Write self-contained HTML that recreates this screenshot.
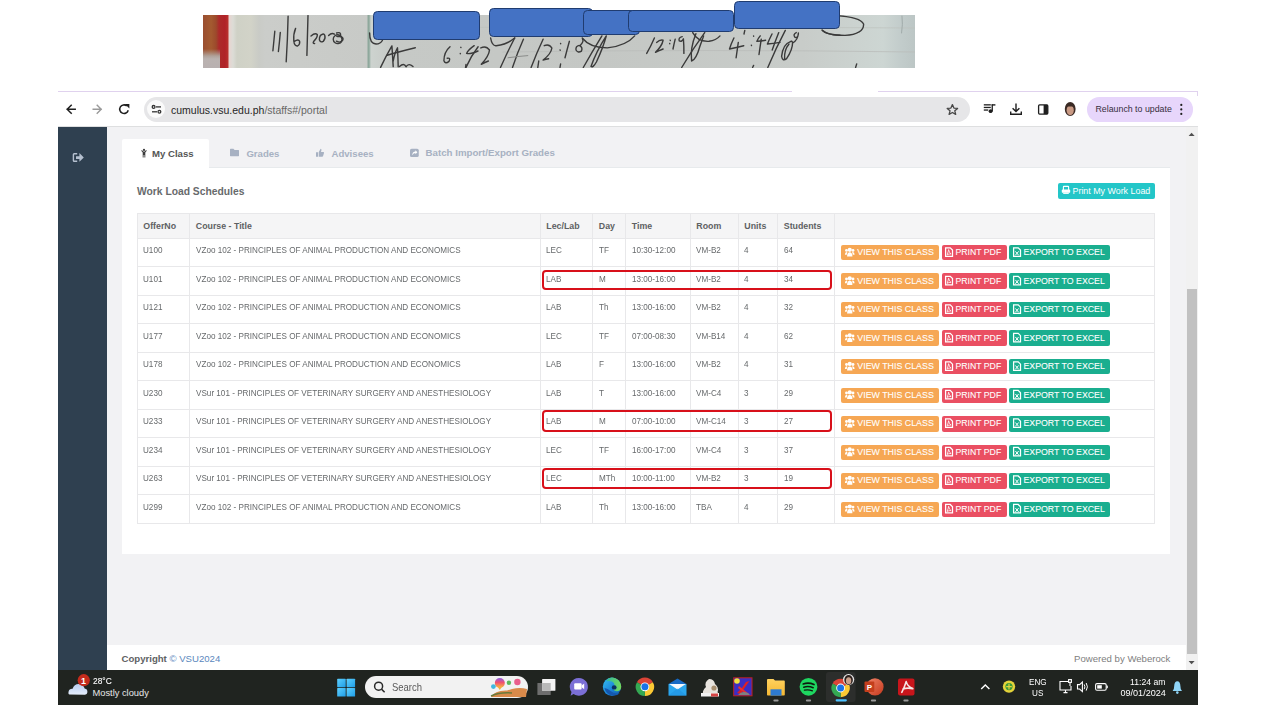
<!DOCTYPE html>
<html><head><meta charset="utf-8"><style>
html,body{margin:0;padding:0;width:1280px;height:720px;overflow:hidden;background:#ffffff;font-family:"Liberation Sans", sans-serif;position:relative}
</style></head><body>
<div style="position:absolute;left:203px;top:15px;width:712px;height:53px;overflow:hidden;background:linear-gradient(90deg,#9a4e30 0px,#a45a30 8px,#9c4a2c 13px,#ac2a2a 16px,#b02228 22px,#b8302e 25px,#e8d4d0 26px,#dcdcd6 30px,#cfd1c6 34px,#d2d3c8 48px,#c9cbc6 56px,#cbcdca 62px,#c8cac7 164px,#8ea89c 165px,#8ea89c 166px,#cdd3cf 168px,#c6c9c6 190px,#c4c7c4 400px,#c8ccc9 600px,#cdd6d3 680px,#c2cccb 698px,#bcc6c5 712px)"><div style="position:absolute;left:0;top:34px;width:17px;height:19px;background:linear-gradient(180deg,rgba(176,120,60,0) 0px,#b0a29a 7px,#bab2b0 10px,#b8b0b0 19px)"></div><svg width="712" height="53" style="position:absolute;left:0;top:0;filter:blur(0.35px)" fill="none" stroke="#3a3a3a" stroke-width="1.4" stroke-linecap="round" stroke-linejoin="round"><path d="M300 37 Q500 34 712 37" stroke="#babdba" stroke-width="0.8"/><path d="M190 13 Q400 11 712 13" stroke="#bdc1bd" stroke-width="0.7"/><g transform="translate(-203,-15)"><path d="M274.8 31.2 Q274 40 272.9 50.7"/><path d="M280.3 32.4 Q279.5 42 278.4 51.5"/><path d="M288.1 16.3 Q287.6 40 286.2 61.7"/><path d="M295.6 28.4 Q293.2 34 293.8 41 Q294.4 46.4 297.6 46 Q300.2 44.6 299.6 41.2 Q298.4 38.8 294.4 41.4"/><path d="M308 15.6 Q307.4 36 306.9 55.4"/><path d="M311 36 Q315 32.5 317.3 34.5 Q317.6 37.5 313.6 41.5 Q312.4 43.6 314.6 43.5"/><path d="M322.6 34.2 Q319.2 35 319.4 39.8 Q320.2 42.8 323.2 41.4 Q325.8 38.6 324.8 35.4 Q324 33.6 322.6 34.2"/><path d="M328.6 35.6 Q331.6 32.4 334.4 34.2"/><path d="M336.6 33 Q341 31.6 340.6 35.2 Q338.6 36.8 336.8 36.4 M336.8 36.4 Q344.6 36.2 342.6 40.4 Q340 43.4 336.4 41.2"/><path d="M338.9 35 A4.4 4.4 0 1 0 339 43.4 A4.4 4.4 0 0 0 338.9 35"/><path d="M369.6 33 Q369.6 43.6 376 44 Q380.6 44 382.5 40.25"/><path d="M380.6 67.4 Q386 56 391.9 45.9 Q392.6 56 393.2 66.6 M393.2 61 Q395 52 397.5 47.75 Q398 58 398.2 66.8"/><path d="M387.2 55.25 Q398 52 415.3 47.75"/><path d="M399.5 66.6 Q404 62.4 406 66.8 Q408.6 62.6 413 66.6"/><path d="M450 46.8 Q444 52 443.9 60.75 Q445.2 64.4 449 61.4 Q451 57.6 447.2 58.2"/><path d="M460.8 47.3 L460.9 47.6 M460.3 53.4 L460.4 53.7"/><path d="M478.1 46.8 Q471 56 466 67.4"/><path d="M474.2 45.7 Q468 50 466.6 53.4 Q470 54.4 478 51"/><path d="M480.8 47.9 Q486 45.2 489.5 50 Q489 56 481.3 64.3 Q485 62.4 488.4 61"/><path d="M490.6 38 Q492 46 496.1 45.7 Q507 44.6 514.7 38"/><path d="M514.7 38 Q507.4 52 500.5 67.5"/><path d="M523.4 39.2 Q517.6 52 512.5 67.5"/><path d="M508 57.75 Q518 56.4 527.8 55.6" stroke="#8a8c8a" stroke-width="1"/><path d="M543.1 39.2 Q537 52 531.1 67.5"/><path d="M544.2 45.7 Q549 43.4 551.9 48 Q551 54 543.1 60 Q546 59.2 548.6 58.8"/><path d="M560.6 43.5 L560.7 43.8 M560.1 50 L560.2 50.3"/><path d="M569.4 41.3 Q567 50 565 57.75"/><path d="M579.2 45.4 Q575.4 46.2 576 50 Q578 53.4 581.4 51.2 Q583.2 47.2 579.2 45.4 M580.6 45 Q584 41.6 582.6 39.2"/><path d="M538.75 61 L537.8 67.5 M560.6 64 L560 67.5 M466 64.4 L465.5 67.5"/><path d="M582.2 38 Q590 47.9 607.3 47.9 Q626 46 634.7 35.9"/><path d="M601.9 35.9 Q592 52 583.3 67.5"/><path d="M606.25 35.9 Q596 52 591 66.5 Q593 68 596.4 62 Q603 48 606.25 36"/><path d="M654.4 38 Q651 46 646.7 53.4"/><path d="M656.6 42.4 Q660 39.4 663.1 40.25 Q662 46 655.5 52.3 Q659 50.6 663.1 49"/><path d="M670.2 40.25 L670.3 40.5 M669.7 43.5 L669.8 43.8"/><path d="M675.2 39.2 Q674 44 673 49"/><path d="M682.2 36.6 Q678.2 37.4 679.2 40.8 Q682 42.2 683.4 38.8 Q684 46 683.9 53.4"/><path d="M704.7 32.6 Q692 50 681.7 67.5"/><path d="M695.9 33.7 Q690 48 691.6 61 Q696 60 700 46 Q703 38 703.6 35.9"/><path d="M692.7 32.6 Q698 42 709 41.3 Q716 40.4 720 35.9"/><path d="M733.9 38 Q731 44 729.5 49 Q736 47.6 743.75 45.7"/><path d="M738.3 42.4 Q737.2 50 736.1 57.75"/><path d="M744.8 30.4 L744 34"/><path d="M753.6 35.9 L753.7 36.2 M751.4 45.2 L751.5 45.5"/><path d="M760.2 35.9 Q758 38.6 756.9 41.3 Q761 41 765.6 40.25"/><path d="M761.25 39.2 Q760.2 46 759 54.5"/><path d="M785.3 30.4 Q776 48 767.8 67.5"/><path d="M772 34 Q769 40 767.4 44 Q773 43.4 780 42.4"/><path d="M789 44 Q784 50 784.6 58.8"/><path d="M778.75 32.6 Q775.4 41 772.2 50"/><path d="M790.4 41.6 Q783 44 781.6 56.4 Q782.6 62 786.6 58.6 Q792.6 50 792.6 42.6 Q791.8 40.4 790.4 41.6"/><path d="M796.25 32.6 Q792.6 34.4 795 37.4 Q798.4 38 798.4 33 Q798 40 792.6 43"/><path d="M822.5 30.4 Q826 34.8 840 35.3"/><path d="M753.6 65.4 L752.6 67.5"/><path d="M836 15.6 Q860 17 863.6 24 Q864 34 845 35.4 Q826 35 822 30"/><path d="M856.7 63.9 L855.6 67.5"/><path d="M902 16 Q903 24 901.6 33" stroke="#a0aaa9" stroke-width="1"/></g></svg></div><div style="position:absolute;left:373px;top:11.3px;width:107.00px;height:28.40px;background:#4472c4;border:1.3px solid #203c70;border-radius:4.5px;box-sizing:border-box"></div><div style="position:absolute;left:489.4px;top:8.3px;width:104.00px;height:29.20px;background:#4472c4;border:1.3px solid #203c70;border-radius:4.5px;box-sizing:border-box"></div><div style="position:absolute;left:583.3px;top:10.3px;width:56.70px;height:24.70px;background:#4472c4;border:1.3px solid #203c70;border-radius:4.5px;box-sizing:border-box"></div><div style="position:absolute;left:628px;top:10.3px;width:106.00px;height:21.40px;background:#4472c4;border:1.3px solid #203c70;border-radius:4.5px;box-sizing:border-box"></div><div style="position:absolute;left:734px;top:1.1px;width:106.30px;height:28.40px;background:#4472c4;border:1.3px solid #203c70;border-radius:4.5px;box-sizing:border-box"></div><div style="position:absolute;left:58px;top:91px;width:1140.00px;height:35.00px;background:#ffffff"></div><div style="position:absolute;left:58px;top:91px;width:733.50px;height:1.00px;background:#e0d2ee"></div><div style="position:absolute;left:877.5px;top:91px;width:320.50px;height:1.00px;background:#e0d2ee"></div><div style="position:absolute;left:1197px;top:91px;width:1.00px;height:5.00px;background:#e0d2ee"></div><div style="position:absolute;left:58px;top:126px;width:1140.00px;height:1.40px;background:#dedfe0"></div><div style="position:absolute;left:144px;top:97px;width:826.00px;height:25.00px;background:#e6e6e8;border-radius:12.5px"></div><div style="position:absolute;left:147.3px;top:100.3px;width:18.10px;height:18.10px;background:#fafafa;border-radius:50%"></div><div style="position:absolute;left:171.00px;top:104.36px;font-size:10.5px;line-height:12.60px;font-weight:normal;color:#262626;white-space:nowrap;">cumulus.vsu.edu.ph<span style="color:#666">/staffs#/portal</span></div><div style="position:absolute;left:1086.8px;top:97.2px;width:106.20px;height:24.60px;background:#e7d6fb;border-radius:12.3px"></div><div style="position:absolute;left:1095.50px;top:104.27px;font-size:8.8px;line-height:10.56px;font-weight:normal;color:#362e40;white-space:nowrap;">Relaunch to update</div><div style="position:absolute;left:58px;top:127.4px;width:49.00px;height:542.60px;background:#2f4050"></div><div style="position:absolute;left:107px;top:127.4px;width:1079.00px;height:517.60px;background:#f2f2f4"></div><div style="position:absolute;left:107px;top:645px;width:1079.00px;height:25.00px;background:#ffffff"></div><div style="position:absolute;left:1186px;top:127.4px;width:12.00px;height:542.60px;background:#f1f1f1"></div><div style="position:absolute;left:1186.6px;top:289.4px;width:10.20px;height:364.60px;background:#c1c1c1"></div><div style="position:absolute;left:122.4px;top:139px;width:86.40px;height:29.00px;background:#ffffff;border-radius:2px 2px 0 0"></div><div style="position:absolute;left:208.8px;top:167px;width:961.20px;height:1.00px;background:#e7eaec"></div><div style="position:absolute;left:152.00px;top:147.51px;font-size:9.6px;line-height:11.52px;font-weight:bold;color:#555555;white-space:nowrap;">My Class</div><div style="position:absolute;left:246.40px;top:147.51px;font-size:9.6px;line-height:11.52px;font-weight:bold;color:#a7b1c2;white-space:nowrap;">Grades</div><div style="position:absolute;left:331.50px;top:147.51px;font-size:9.6px;line-height:11.52px;font-weight:bold;color:#a7b1c2;white-space:nowrap;">Advisees</div><div style="position:absolute;left:425.60px;top:147.42px;font-size:9.7px;line-height:11.64px;font-weight:bold;color:#a7b1c2;white-space:nowrap;">Batch Import/Export Grades</div><div style="position:absolute;left:122.4px;top:168px;width:1047.60px;height:386.00px;background:#ffffff"></div><div style="position:absolute;left:137.00px;top:186.05px;font-size:10.3px;line-height:12.36px;font-weight:bold;color:#676a6c;white-space:nowrap;">Work Load Schedules</div><div style="position:absolute;left:1057.5px;top:182.5px;width:97.50px;height:16.00px;background:#23c6c8;border-radius:2px"></div><div style="position:absolute;left:1072.50px;top:185.58px;font-size:8.9px;line-height:10.68px;font-weight:normal;color:#ffffff;white-space:nowrap;">Print My Work Load</div><div style="position:absolute;left:137px;top:213.0px;width:1017.50px;height:25.30px;background:#f5f5f6"></div><div style="position:absolute;left:137px;top:237.8px;width:1017.50px;height:1.00px;background:#e8e8ea"></div><div style="position:absolute;left:137px;top:266.32px;width:1017.50px;height:1.00px;background:#e8e8ea"></div><div style="position:absolute;left:137px;top:294.84000000000003px;width:1017.50px;height:1.00px;background:#e8e8ea"></div><div style="position:absolute;left:137px;top:323.36px;width:1017.50px;height:1.00px;background:#e8e8ea"></div><div style="position:absolute;left:137px;top:351.88px;width:1017.50px;height:1.00px;background:#e8e8ea"></div><div style="position:absolute;left:137px;top:380.4px;width:1017.50px;height:1.00px;background:#e8e8ea"></div><div style="position:absolute;left:137px;top:408.92px;width:1017.50px;height:1.00px;background:#e8e8ea"></div><div style="position:absolute;left:137px;top:437.44px;width:1017.50px;height:1.00px;background:#e8e8ea"></div><div style="position:absolute;left:137px;top:465.96000000000004px;width:1017.50px;height:1.00px;background:#e8e8ea"></div><div style="position:absolute;left:137px;top:494.48px;width:1017.50px;height:1.00px;background:#e8e8ea"></div><div style="position:absolute;left:137px;top:523.0px;width:1017.50px;height:1.00px;background:#e8e8ea"></div><div style="position:absolute;left:137px;top:212.5px;width:1017.50px;height:1.00px;background:#e8e8ea"></div><div style="position:absolute;left:136.5px;top:213.0px;width:1.00px;height:310.50px;background:#e8e8ea"></div><div style="position:absolute;left:189.0px;top:213.0px;width:1.00px;height:310.50px;background:#e8e8ea"></div><div style="position:absolute;left:539.5px;top:213.0px;width:1.00px;height:310.50px;background:#e8e8ea"></div><div style="position:absolute;left:592.0px;top:213.0px;width:1.00px;height:310.50px;background:#e8e8ea"></div><div style="position:absolute;left:625.0px;top:213.0px;width:1.00px;height:310.50px;background:#e8e8ea"></div><div style="position:absolute;left:689.5px;top:213.0px;width:1.00px;height:310.50px;background:#e8e8ea"></div><div style="position:absolute;left:737.5px;top:213.0px;width:1.00px;height:310.50px;background:#e8e8ea"></div><div style="position:absolute;left:777.0px;top:213.0px;width:1.00px;height:310.50px;background:#e8e8ea"></div><div style="position:absolute;left:834.0px;top:213.0px;width:1.00px;height:310.50px;background:#e8e8ea"></div><div style="position:absolute;left:1154.0px;top:213.0px;width:1.00px;height:310.50px;background:#e8e8ea"></div><div style="position:absolute;left:143.30px;top:220.57px;font-size:8.8px;line-height:10.56px;font-weight:bold;color:#5e6163;white-space:nowrap;">OfferNo</div><div style="position:absolute;left:195.80px;top:220.57px;font-size:8.8px;line-height:10.56px;font-weight:bold;color:#5e6163;white-space:nowrap;">Course - Title</div><div style="position:absolute;left:546.30px;top:220.57px;font-size:8.8px;line-height:10.56px;font-weight:bold;color:#5e6163;white-space:nowrap;">Lec/Lab</div><div style="position:absolute;left:598.80px;top:220.57px;font-size:8.8px;line-height:10.56px;font-weight:bold;color:#5e6163;white-space:nowrap;">Day</div><div style="position:absolute;left:631.80px;top:220.57px;font-size:8.8px;line-height:10.56px;font-weight:bold;color:#5e6163;white-space:nowrap;">Time</div><div style="position:absolute;left:696.30px;top:220.57px;font-size:8.8px;line-height:10.56px;font-weight:bold;color:#5e6163;white-space:nowrap;">Room</div><div style="position:absolute;left:744.30px;top:220.57px;font-size:8.8px;line-height:10.56px;font-weight:bold;color:#5e6163;white-space:nowrap;">Units</div><div style="position:absolute;left:783.80px;top:220.57px;font-size:8.8px;line-height:10.56px;font-weight:bold;color:#5e6163;white-space:nowrap;">Students</div><div style="position:absolute;left:143.20px;top:245.00px;font-size:8.35px;line-height:10.02px;font-weight:normal;color:#676a6c;white-space:nowrap;transform:scaleX(0.975);transform-origin:0 0;">U100</div><div style="position:absolute;left:195.70px;top:245.00px;font-size:8.35px;line-height:10.02px;font-weight:normal;color:#676a6c;white-space:nowrap;transform:scaleX(0.975);transform-origin:0 0;">VZoo 102 - PRINCIPLES OF ANIMAL PRODUCTION AND ECONOMICS</div><div style="position:absolute;left:546.20px;top:245.00px;font-size:8.35px;line-height:10.02px;font-weight:normal;color:#676a6c;white-space:nowrap;transform:scaleX(0.975);transform-origin:0 0;">LEC</div><div style="position:absolute;left:598.70px;top:245.00px;font-size:8.35px;line-height:10.02px;font-weight:normal;color:#676a6c;white-space:nowrap;transform:scaleX(0.975);transform-origin:0 0;">TF</div><div style="position:absolute;left:631.70px;top:245.00px;font-size:8.35px;line-height:10.02px;font-weight:normal;color:#676a6c;white-space:nowrap;transform:scaleX(0.975);transform-origin:0 0;">10:30-12:00</div><div style="position:absolute;left:696.20px;top:245.00px;font-size:8.35px;line-height:10.02px;font-weight:normal;color:#676a6c;white-space:nowrap;transform:scaleX(0.975);transform-origin:0 0;">VM-B2</div><div style="position:absolute;left:744.20px;top:245.00px;font-size:8.35px;line-height:10.02px;font-weight:normal;color:#676a6c;white-space:nowrap;transform:scaleX(0.975);transform-origin:0 0;">4</div><div style="position:absolute;left:783.70px;top:245.00px;font-size:8.35px;line-height:10.02px;font-weight:normal;color:#676a6c;white-space:nowrap;transform:scaleX(0.975);transform-origin:0 0;">64</div><div style="position:absolute;left:840.6px;top:244.9px;width:98.20px;height:15.50px;background:#f6a754;border-radius:2px"></div><div style="position:absolute;left:941.5px;top:244.9px;width:65.10px;height:15.50px;background:#ea4f62;border-radius:2px"></div><div style="position:absolute;left:1009.2px;top:244.9px;width:101.20px;height:15.50px;background:#1aae8f;border-radius:2px"></div><div style="position:absolute;left:857.30px;top:247.02px;font-size:8.85px;line-height:10.62px;font-weight:normal;color:#ffffff;white-space:nowrap;-webkit-text-stroke:0.08px #fff;">VIEW THIS CLASS</div><div style="position:absolute;left:955.50px;top:247.17px;font-size:8.7px;line-height:10.44px;font-weight:normal;color:#ffffff;white-space:nowrap;-webkit-text-stroke:0.08px #fff;">PRINT PDF</div><div style="position:absolute;left:1023.40px;top:247.07px;font-size:8.8px;line-height:10.56px;font-weight:normal;color:#ffffff;white-space:nowrap;-webkit-text-stroke:0.08px #fff;">EXPORT TO EXCEL</div><div style="position:absolute;left:143.20px;top:273.52px;font-size:8.35px;line-height:10.02px;font-weight:normal;color:#676a6c;white-space:nowrap;transform:scaleX(0.975);transform-origin:0 0;">U101</div><div style="position:absolute;left:195.70px;top:273.52px;font-size:8.35px;line-height:10.02px;font-weight:normal;color:#676a6c;white-space:nowrap;transform:scaleX(0.975);transform-origin:0 0;">VZoo 102 - PRINCIPLES OF ANIMAL PRODUCTION AND ECONOMICS</div><div style="position:absolute;left:546.20px;top:273.52px;font-size:8.35px;line-height:10.02px;font-weight:normal;color:#676a6c;white-space:nowrap;transform:scaleX(0.975);transform-origin:0 0;">LAB</div><div style="position:absolute;left:598.70px;top:273.52px;font-size:8.35px;line-height:10.02px;font-weight:normal;color:#676a6c;white-space:nowrap;transform:scaleX(0.975);transform-origin:0 0;">M</div><div style="position:absolute;left:631.70px;top:273.52px;font-size:8.35px;line-height:10.02px;font-weight:normal;color:#676a6c;white-space:nowrap;transform:scaleX(0.975);transform-origin:0 0;">13:00-16:00</div><div style="position:absolute;left:696.20px;top:273.52px;font-size:8.35px;line-height:10.02px;font-weight:normal;color:#676a6c;white-space:nowrap;transform:scaleX(0.975);transform-origin:0 0;">VM-B2</div><div style="position:absolute;left:744.20px;top:273.52px;font-size:8.35px;line-height:10.02px;font-weight:normal;color:#676a6c;white-space:nowrap;transform:scaleX(0.975);transform-origin:0 0;">4</div><div style="position:absolute;left:783.70px;top:273.52px;font-size:8.35px;line-height:10.02px;font-weight:normal;color:#676a6c;white-space:nowrap;transform:scaleX(0.975);transform-origin:0 0;">34</div><div style="position:absolute;left:840.6px;top:273.42px;width:98.20px;height:15.50px;background:#f6a754;border-radius:2px"></div><div style="position:absolute;left:941.5px;top:273.42px;width:65.10px;height:15.50px;background:#ea4f62;border-radius:2px"></div><div style="position:absolute;left:1009.2px;top:273.42px;width:101.20px;height:15.50px;background:#1aae8f;border-radius:2px"></div><div style="position:absolute;left:857.30px;top:275.54px;font-size:8.85px;line-height:10.62px;font-weight:normal;color:#ffffff;white-space:nowrap;-webkit-text-stroke:0.08px #fff;">VIEW THIS CLASS</div><div style="position:absolute;left:955.50px;top:275.69px;font-size:8.7px;line-height:10.44px;font-weight:normal;color:#ffffff;white-space:nowrap;-webkit-text-stroke:0.08px #fff;">PRINT PDF</div><div style="position:absolute;left:1023.40px;top:275.59px;font-size:8.8px;line-height:10.56px;font-weight:normal;color:#ffffff;white-space:nowrap;-webkit-text-stroke:0.08px #fff;">EXPORT TO EXCEL</div><div style="position:absolute;left:143.20px;top:302.04px;font-size:8.35px;line-height:10.02px;font-weight:normal;color:#676a6c;white-space:nowrap;transform:scaleX(0.975);transform-origin:0 0;">U121</div><div style="position:absolute;left:195.70px;top:302.04px;font-size:8.35px;line-height:10.02px;font-weight:normal;color:#676a6c;white-space:nowrap;transform:scaleX(0.975);transform-origin:0 0;">VZoo 102 - PRINCIPLES OF ANIMAL PRODUCTION AND ECONOMICS</div><div style="position:absolute;left:546.20px;top:302.04px;font-size:8.35px;line-height:10.02px;font-weight:normal;color:#676a6c;white-space:nowrap;transform:scaleX(0.975);transform-origin:0 0;">LAB</div><div style="position:absolute;left:598.70px;top:302.04px;font-size:8.35px;line-height:10.02px;font-weight:normal;color:#676a6c;white-space:nowrap;transform:scaleX(0.975);transform-origin:0 0;">Th</div><div style="position:absolute;left:631.70px;top:302.04px;font-size:8.35px;line-height:10.02px;font-weight:normal;color:#676a6c;white-space:nowrap;transform:scaleX(0.975);transform-origin:0 0;">13:00-16:00</div><div style="position:absolute;left:696.20px;top:302.04px;font-size:8.35px;line-height:10.02px;font-weight:normal;color:#676a6c;white-space:nowrap;transform:scaleX(0.975);transform-origin:0 0;">VM-B2</div><div style="position:absolute;left:744.20px;top:302.04px;font-size:8.35px;line-height:10.02px;font-weight:normal;color:#676a6c;white-space:nowrap;transform:scaleX(0.975);transform-origin:0 0;">4</div><div style="position:absolute;left:783.70px;top:302.04px;font-size:8.35px;line-height:10.02px;font-weight:normal;color:#676a6c;white-space:nowrap;transform:scaleX(0.975);transform-origin:0 0;">32</div><div style="position:absolute;left:840.6px;top:301.94000000000005px;width:98.20px;height:15.50px;background:#f6a754;border-radius:2px"></div><div style="position:absolute;left:941.5px;top:301.94000000000005px;width:65.10px;height:15.50px;background:#ea4f62;border-radius:2px"></div><div style="position:absolute;left:1009.2px;top:301.94000000000005px;width:101.20px;height:15.50px;background:#1aae8f;border-radius:2px"></div><div style="position:absolute;left:857.30px;top:304.06px;font-size:8.85px;line-height:10.62px;font-weight:normal;color:#ffffff;white-space:nowrap;-webkit-text-stroke:0.08px #fff;">VIEW THIS CLASS</div><div style="position:absolute;left:955.50px;top:304.21px;font-size:8.7px;line-height:10.44px;font-weight:normal;color:#ffffff;white-space:nowrap;-webkit-text-stroke:0.08px #fff;">PRINT PDF</div><div style="position:absolute;left:1023.40px;top:304.11px;font-size:8.8px;line-height:10.56px;font-weight:normal;color:#ffffff;white-space:nowrap;-webkit-text-stroke:0.08px #fff;">EXPORT TO EXCEL</div><div style="position:absolute;left:143.20px;top:330.56px;font-size:8.35px;line-height:10.02px;font-weight:normal;color:#676a6c;white-space:nowrap;transform:scaleX(0.975);transform-origin:0 0;">U177</div><div style="position:absolute;left:195.70px;top:330.56px;font-size:8.35px;line-height:10.02px;font-weight:normal;color:#676a6c;white-space:nowrap;transform:scaleX(0.975);transform-origin:0 0;">VZoo 102 - PRINCIPLES OF ANIMAL PRODUCTION AND ECONOMICS</div><div style="position:absolute;left:546.20px;top:330.56px;font-size:8.35px;line-height:10.02px;font-weight:normal;color:#676a6c;white-space:nowrap;transform:scaleX(0.975);transform-origin:0 0;">LEC</div><div style="position:absolute;left:598.70px;top:330.56px;font-size:8.35px;line-height:10.02px;font-weight:normal;color:#676a6c;white-space:nowrap;transform:scaleX(0.975);transform-origin:0 0;">TF</div><div style="position:absolute;left:631.70px;top:330.56px;font-size:8.35px;line-height:10.02px;font-weight:normal;color:#676a6c;white-space:nowrap;transform:scaleX(0.975);transform-origin:0 0;">07:00-08:30</div><div style="position:absolute;left:696.20px;top:330.56px;font-size:8.35px;line-height:10.02px;font-weight:normal;color:#676a6c;white-space:nowrap;transform:scaleX(0.975);transform-origin:0 0;">VM-B14</div><div style="position:absolute;left:744.20px;top:330.56px;font-size:8.35px;line-height:10.02px;font-weight:normal;color:#676a6c;white-space:nowrap;transform:scaleX(0.975);transform-origin:0 0;">4</div><div style="position:absolute;left:783.70px;top:330.56px;font-size:8.35px;line-height:10.02px;font-weight:normal;color:#676a6c;white-space:nowrap;transform:scaleX(0.975);transform-origin:0 0;">62</div><div style="position:absolute;left:840.6px;top:330.46000000000004px;width:98.20px;height:15.50px;background:#f6a754;border-radius:2px"></div><div style="position:absolute;left:941.5px;top:330.46000000000004px;width:65.10px;height:15.50px;background:#ea4f62;border-radius:2px"></div><div style="position:absolute;left:1009.2px;top:330.46000000000004px;width:101.20px;height:15.50px;background:#1aae8f;border-radius:2px"></div><div style="position:absolute;left:857.30px;top:332.58px;font-size:8.85px;line-height:10.62px;font-weight:normal;color:#ffffff;white-space:nowrap;-webkit-text-stroke:0.08px #fff;">VIEW THIS CLASS</div><div style="position:absolute;left:955.50px;top:332.73px;font-size:8.7px;line-height:10.44px;font-weight:normal;color:#ffffff;white-space:nowrap;-webkit-text-stroke:0.08px #fff;">PRINT PDF</div><div style="position:absolute;left:1023.40px;top:332.63px;font-size:8.8px;line-height:10.56px;font-weight:normal;color:#ffffff;white-space:nowrap;-webkit-text-stroke:0.08px #fff;">EXPORT TO EXCEL</div><div style="position:absolute;left:143.20px;top:359.08px;font-size:8.35px;line-height:10.02px;font-weight:normal;color:#676a6c;white-space:nowrap;transform:scaleX(0.975);transform-origin:0 0;">U178</div><div style="position:absolute;left:195.70px;top:359.08px;font-size:8.35px;line-height:10.02px;font-weight:normal;color:#676a6c;white-space:nowrap;transform:scaleX(0.975);transform-origin:0 0;">VZoo 102 - PRINCIPLES OF ANIMAL PRODUCTION AND ECONOMICS</div><div style="position:absolute;left:546.20px;top:359.08px;font-size:8.35px;line-height:10.02px;font-weight:normal;color:#676a6c;white-space:nowrap;transform:scaleX(0.975);transform-origin:0 0;">LAB</div><div style="position:absolute;left:598.70px;top:359.08px;font-size:8.35px;line-height:10.02px;font-weight:normal;color:#676a6c;white-space:nowrap;transform:scaleX(0.975);transform-origin:0 0;">F</div><div style="position:absolute;left:631.70px;top:359.08px;font-size:8.35px;line-height:10.02px;font-weight:normal;color:#676a6c;white-space:nowrap;transform:scaleX(0.975);transform-origin:0 0;">13:00-16:00</div><div style="position:absolute;left:696.20px;top:359.08px;font-size:8.35px;line-height:10.02px;font-weight:normal;color:#676a6c;white-space:nowrap;transform:scaleX(0.975);transform-origin:0 0;">VM-B2</div><div style="position:absolute;left:744.20px;top:359.08px;font-size:8.35px;line-height:10.02px;font-weight:normal;color:#676a6c;white-space:nowrap;transform:scaleX(0.975);transform-origin:0 0;">4</div><div style="position:absolute;left:783.70px;top:359.08px;font-size:8.35px;line-height:10.02px;font-weight:normal;color:#676a6c;white-space:nowrap;transform:scaleX(0.975);transform-origin:0 0;">31</div><div style="position:absolute;left:840.6px;top:358.98px;width:98.20px;height:15.50px;background:#f6a754;border-radius:2px"></div><div style="position:absolute;left:941.5px;top:358.98px;width:65.10px;height:15.50px;background:#ea4f62;border-radius:2px"></div><div style="position:absolute;left:1009.2px;top:358.98px;width:101.20px;height:15.50px;background:#1aae8f;border-radius:2px"></div><div style="position:absolute;left:857.30px;top:361.10px;font-size:8.85px;line-height:10.62px;font-weight:normal;color:#ffffff;white-space:nowrap;-webkit-text-stroke:0.08px #fff;">VIEW THIS CLASS</div><div style="position:absolute;left:955.50px;top:361.25px;font-size:8.7px;line-height:10.44px;font-weight:normal;color:#ffffff;white-space:nowrap;-webkit-text-stroke:0.08px #fff;">PRINT PDF</div><div style="position:absolute;left:1023.40px;top:361.15px;font-size:8.8px;line-height:10.56px;font-weight:normal;color:#ffffff;white-space:nowrap;-webkit-text-stroke:0.08px #fff;">EXPORT TO EXCEL</div><div style="position:absolute;left:143.20px;top:387.60px;font-size:8.35px;line-height:10.02px;font-weight:normal;color:#676a6c;white-space:nowrap;transform:scaleX(0.975);transform-origin:0 0;">U230</div><div style="position:absolute;left:195.70px;top:387.60px;font-size:8.35px;line-height:10.02px;font-weight:normal;color:#676a6c;white-space:nowrap;transform:scaleX(0.975);transform-origin:0 0;">VSur 101 - PRINCIPLES OF VETERINARY SURGERY AND ANESTHESIOLOGY</div><div style="position:absolute;left:546.20px;top:387.60px;font-size:8.35px;line-height:10.02px;font-weight:normal;color:#676a6c;white-space:nowrap;transform:scaleX(0.975);transform-origin:0 0;">LAB</div><div style="position:absolute;left:598.70px;top:387.60px;font-size:8.35px;line-height:10.02px;font-weight:normal;color:#676a6c;white-space:nowrap;transform:scaleX(0.975);transform-origin:0 0;">T</div><div style="position:absolute;left:631.70px;top:387.60px;font-size:8.35px;line-height:10.02px;font-weight:normal;color:#676a6c;white-space:nowrap;transform:scaleX(0.975);transform-origin:0 0;">13:00-16:00</div><div style="position:absolute;left:696.20px;top:387.60px;font-size:8.35px;line-height:10.02px;font-weight:normal;color:#676a6c;white-space:nowrap;transform:scaleX(0.975);transform-origin:0 0;">VM-C4</div><div style="position:absolute;left:744.20px;top:387.60px;font-size:8.35px;line-height:10.02px;font-weight:normal;color:#676a6c;white-space:nowrap;transform:scaleX(0.975);transform-origin:0 0;">3</div><div style="position:absolute;left:783.70px;top:387.60px;font-size:8.35px;line-height:10.02px;font-weight:normal;color:#676a6c;white-space:nowrap;transform:scaleX(0.975);transform-origin:0 0;">29</div><div style="position:absolute;left:840.6px;top:387.5px;width:98.20px;height:15.50px;background:#f6a754;border-radius:2px"></div><div style="position:absolute;left:941.5px;top:387.5px;width:65.10px;height:15.50px;background:#ea4f62;border-radius:2px"></div><div style="position:absolute;left:1009.2px;top:387.5px;width:101.20px;height:15.50px;background:#1aae8f;border-radius:2px"></div><div style="position:absolute;left:857.30px;top:389.62px;font-size:8.85px;line-height:10.62px;font-weight:normal;color:#ffffff;white-space:nowrap;-webkit-text-stroke:0.08px #fff;">VIEW THIS CLASS</div><div style="position:absolute;left:955.50px;top:389.77px;font-size:8.7px;line-height:10.44px;font-weight:normal;color:#ffffff;white-space:nowrap;-webkit-text-stroke:0.08px #fff;">PRINT PDF</div><div style="position:absolute;left:1023.40px;top:389.67px;font-size:8.8px;line-height:10.56px;font-weight:normal;color:#ffffff;white-space:nowrap;-webkit-text-stroke:0.08px #fff;">EXPORT TO EXCEL</div><div style="position:absolute;left:143.20px;top:416.12px;font-size:8.35px;line-height:10.02px;font-weight:normal;color:#676a6c;white-space:nowrap;transform:scaleX(0.975);transform-origin:0 0;">U233</div><div style="position:absolute;left:195.70px;top:416.12px;font-size:8.35px;line-height:10.02px;font-weight:normal;color:#676a6c;white-space:nowrap;transform:scaleX(0.975);transform-origin:0 0;">VSur 101 - PRINCIPLES OF VETERINARY SURGERY AND ANESTHESIOLOGY</div><div style="position:absolute;left:546.20px;top:416.12px;font-size:8.35px;line-height:10.02px;font-weight:normal;color:#676a6c;white-space:nowrap;transform:scaleX(0.975);transform-origin:0 0;">LAB</div><div style="position:absolute;left:598.70px;top:416.12px;font-size:8.35px;line-height:10.02px;font-weight:normal;color:#676a6c;white-space:nowrap;transform:scaleX(0.975);transform-origin:0 0;">M</div><div style="position:absolute;left:631.70px;top:416.12px;font-size:8.35px;line-height:10.02px;font-weight:normal;color:#676a6c;white-space:nowrap;transform:scaleX(0.975);transform-origin:0 0;">07:00-10:00</div><div style="position:absolute;left:696.20px;top:416.12px;font-size:8.35px;line-height:10.02px;font-weight:normal;color:#676a6c;white-space:nowrap;transform:scaleX(0.975);transform-origin:0 0;">VM-C14</div><div style="position:absolute;left:744.20px;top:416.12px;font-size:8.35px;line-height:10.02px;font-weight:normal;color:#676a6c;white-space:nowrap;transform:scaleX(0.975);transform-origin:0 0;">3</div><div style="position:absolute;left:783.70px;top:416.12px;font-size:8.35px;line-height:10.02px;font-weight:normal;color:#676a6c;white-space:nowrap;transform:scaleX(0.975);transform-origin:0 0;">27</div><div style="position:absolute;left:840.6px;top:416.02000000000004px;width:98.20px;height:15.50px;background:#f6a754;border-radius:2px"></div><div style="position:absolute;left:941.5px;top:416.02000000000004px;width:65.10px;height:15.50px;background:#ea4f62;border-radius:2px"></div><div style="position:absolute;left:1009.2px;top:416.02000000000004px;width:101.20px;height:15.50px;background:#1aae8f;border-radius:2px"></div><div style="position:absolute;left:857.30px;top:418.14px;font-size:8.85px;line-height:10.62px;font-weight:normal;color:#ffffff;white-space:nowrap;-webkit-text-stroke:0.08px #fff;">VIEW THIS CLASS</div><div style="position:absolute;left:955.50px;top:418.29px;font-size:8.7px;line-height:10.44px;font-weight:normal;color:#ffffff;white-space:nowrap;-webkit-text-stroke:0.08px #fff;">PRINT PDF</div><div style="position:absolute;left:1023.40px;top:418.19px;font-size:8.8px;line-height:10.56px;font-weight:normal;color:#ffffff;white-space:nowrap;-webkit-text-stroke:0.08px #fff;">EXPORT TO EXCEL</div><div style="position:absolute;left:143.20px;top:444.64px;font-size:8.35px;line-height:10.02px;font-weight:normal;color:#676a6c;white-space:nowrap;transform:scaleX(0.975);transform-origin:0 0;">U234</div><div style="position:absolute;left:195.70px;top:444.64px;font-size:8.35px;line-height:10.02px;font-weight:normal;color:#676a6c;white-space:nowrap;transform:scaleX(0.975);transform-origin:0 0;">VSur 101 - PRINCIPLES OF VETERINARY SURGERY AND ANESTHESIOLOGY</div><div style="position:absolute;left:546.20px;top:444.64px;font-size:8.35px;line-height:10.02px;font-weight:normal;color:#676a6c;white-space:nowrap;transform:scaleX(0.975);transform-origin:0 0;">LEC</div><div style="position:absolute;left:598.70px;top:444.64px;font-size:8.35px;line-height:10.02px;font-weight:normal;color:#676a6c;white-space:nowrap;transform:scaleX(0.975);transform-origin:0 0;">TF</div><div style="position:absolute;left:631.70px;top:444.64px;font-size:8.35px;line-height:10.02px;font-weight:normal;color:#676a6c;white-space:nowrap;transform:scaleX(0.975);transform-origin:0 0;">16:00-17:00</div><div style="position:absolute;left:696.20px;top:444.64px;font-size:8.35px;line-height:10.02px;font-weight:normal;color:#676a6c;white-space:nowrap;transform:scaleX(0.975);transform-origin:0 0;">VM-C4</div><div style="position:absolute;left:744.20px;top:444.64px;font-size:8.35px;line-height:10.02px;font-weight:normal;color:#676a6c;white-space:nowrap;transform:scaleX(0.975);transform-origin:0 0;">3</div><div style="position:absolute;left:783.70px;top:444.64px;font-size:8.35px;line-height:10.02px;font-weight:normal;color:#676a6c;white-space:nowrap;transform:scaleX(0.975);transform-origin:0 0;">37</div><div style="position:absolute;left:840.6px;top:444.54px;width:98.20px;height:15.50px;background:#f6a754;border-radius:2px"></div><div style="position:absolute;left:941.5px;top:444.54px;width:65.10px;height:15.50px;background:#ea4f62;border-radius:2px"></div><div style="position:absolute;left:1009.2px;top:444.54px;width:101.20px;height:15.50px;background:#1aae8f;border-radius:2px"></div><div style="position:absolute;left:857.30px;top:446.66px;font-size:8.85px;line-height:10.62px;font-weight:normal;color:#ffffff;white-space:nowrap;-webkit-text-stroke:0.08px #fff;">VIEW THIS CLASS</div><div style="position:absolute;left:955.50px;top:446.81px;font-size:8.7px;line-height:10.44px;font-weight:normal;color:#ffffff;white-space:nowrap;-webkit-text-stroke:0.08px #fff;">PRINT PDF</div><div style="position:absolute;left:1023.40px;top:446.71px;font-size:8.8px;line-height:10.56px;font-weight:normal;color:#ffffff;white-space:nowrap;-webkit-text-stroke:0.08px #fff;">EXPORT TO EXCEL</div><div style="position:absolute;left:143.20px;top:473.16px;font-size:8.35px;line-height:10.02px;font-weight:normal;color:#676a6c;white-space:nowrap;transform:scaleX(0.975);transform-origin:0 0;">U263</div><div style="position:absolute;left:195.70px;top:473.16px;font-size:8.35px;line-height:10.02px;font-weight:normal;color:#676a6c;white-space:nowrap;transform:scaleX(0.975);transform-origin:0 0;">VSur 101 - PRINCIPLES OF VETERINARY SURGERY AND ANESTHESIOLOGY</div><div style="position:absolute;left:546.20px;top:473.16px;font-size:8.35px;line-height:10.02px;font-weight:normal;color:#676a6c;white-space:nowrap;transform:scaleX(0.975);transform-origin:0 0;">LEC</div><div style="position:absolute;left:598.70px;top:473.16px;font-size:8.35px;line-height:10.02px;font-weight:normal;color:#676a6c;white-space:nowrap;transform:scaleX(0.975);transform-origin:0 0;">MTh</div><div style="position:absolute;left:631.70px;top:473.16px;font-size:8.35px;line-height:10.02px;font-weight:normal;color:#676a6c;white-space:nowrap;transform:scaleX(0.975);transform-origin:0 0;">10:00-11:00</div><div style="position:absolute;left:696.20px;top:473.16px;font-size:8.35px;line-height:10.02px;font-weight:normal;color:#676a6c;white-space:nowrap;transform:scaleX(0.975);transform-origin:0 0;">VM-B2</div><div style="position:absolute;left:744.20px;top:473.16px;font-size:8.35px;line-height:10.02px;font-weight:normal;color:#676a6c;white-space:nowrap;transform:scaleX(0.975);transform-origin:0 0;">3</div><div style="position:absolute;left:783.70px;top:473.16px;font-size:8.35px;line-height:10.02px;font-weight:normal;color:#676a6c;white-space:nowrap;transform:scaleX(0.975);transform-origin:0 0;">19</div><div style="position:absolute;left:840.6px;top:473.06000000000006px;width:98.20px;height:15.50px;background:#f6a754;border-radius:2px"></div><div style="position:absolute;left:941.5px;top:473.06000000000006px;width:65.10px;height:15.50px;background:#ea4f62;border-radius:2px"></div><div style="position:absolute;left:1009.2px;top:473.06000000000006px;width:101.20px;height:15.50px;background:#1aae8f;border-radius:2px"></div><div style="position:absolute;left:857.30px;top:475.18px;font-size:8.85px;line-height:10.62px;font-weight:normal;color:#ffffff;white-space:nowrap;-webkit-text-stroke:0.08px #fff;">VIEW THIS CLASS</div><div style="position:absolute;left:955.50px;top:475.33px;font-size:8.7px;line-height:10.44px;font-weight:normal;color:#ffffff;white-space:nowrap;-webkit-text-stroke:0.08px #fff;">PRINT PDF</div><div style="position:absolute;left:1023.40px;top:475.23px;font-size:8.8px;line-height:10.56px;font-weight:normal;color:#ffffff;white-space:nowrap;-webkit-text-stroke:0.08px #fff;">EXPORT TO EXCEL</div><div style="position:absolute;left:143.20px;top:501.68px;font-size:8.35px;line-height:10.02px;font-weight:normal;color:#676a6c;white-space:nowrap;transform:scaleX(0.975);transform-origin:0 0;">U299</div><div style="position:absolute;left:195.70px;top:501.68px;font-size:8.35px;line-height:10.02px;font-weight:normal;color:#676a6c;white-space:nowrap;transform:scaleX(0.975);transform-origin:0 0;">VZoo 102 - PRINCIPLES OF ANIMAL PRODUCTION AND ECONOMICS</div><div style="position:absolute;left:546.20px;top:501.68px;font-size:8.35px;line-height:10.02px;font-weight:normal;color:#676a6c;white-space:nowrap;transform:scaleX(0.975);transform-origin:0 0;">LAB</div><div style="position:absolute;left:598.70px;top:501.68px;font-size:8.35px;line-height:10.02px;font-weight:normal;color:#676a6c;white-space:nowrap;transform:scaleX(0.975);transform-origin:0 0;">Th</div><div style="position:absolute;left:631.70px;top:501.68px;font-size:8.35px;line-height:10.02px;font-weight:normal;color:#676a6c;white-space:nowrap;transform:scaleX(0.975);transform-origin:0 0;">13:00-16:00</div><div style="position:absolute;left:696.20px;top:501.68px;font-size:8.35px;line-height:10.02px;font-weight:normal;color:#676a6c;white-space:nowrap;transform:scaleX(0.975);transform-origin:0 0;">TBA</div><div style="position:absolute;left:744.20px;top:501.68px;font-size:8.35px;line-height:10.02px;font-weight:normal;color:#676a6c;white-space:nowrap;transform:scaleX(0.975);transform-origin:0 0;">4</div><div style="position:absolute;left:783.70px;top:501.68px;font-size:8.35px;line-height:10.02px;font-weight:normal;color:#676a6c;white-space:nowrap;transform:scaleX(0.975);transform-origin:0 0;">29</div><div style="position:absolute;left:840.6px;top:501.58000000000004px;width:98.20px;height:15.50px;background:#f6a754;border-radius:2px"></div><div style="position:absolute;left:941.5px;top:501.58000000000004px;width:65.10px;height:15.50px;background:#ea4f62;border-radius:2px"></div><div style="position:absolute;left:1009.2px;top:501.58000000000004px;width:101.20px;height:15.50px;background:#1aae8f;border-radius:2px"></div><div style="position:absolute;left:857.30px;top:503.70px;font-size:8.85px;line-height:10.62px;font-weight:normal;color:#ffffff;white-space:nowrap;-webkit-text-stroke:0.08px #fff;">VIEW THIS CLASS</div><div style="position:absolute;left:955.50px;top:503.85px;font-size:8.7px;line-height:10.44px;font-weight:normal;color:#ffffff;white-space:nowrap;-webkit-text-stroke:0.08px #fff;">PRINT PDF</div><div style="position:absolute;left:1023.40px;top:503.75px;font-size:8.8px;line-height:10.56px;font-weight:normal;color:#ffffff;white-space:nowrap;-webkit-text-stroke:0.08px #fff;">EXPORT TO EXCEL</div><div style="position:absolute;left:542.4px;top:270.1px;width:289.40px;height:20.40px;border:2.6px solid #d8101a;border-radius:4px;box-sizing:border-box"></div><div style="position:absolute;left:542.4px;top:410.4px;width:289.40px;height:21.30px;border:2.6px solid #d8101a;border-radius:4px;box-sizing:border-box"></div><div style="position:absolute;left:542.4px;top:467.6px;width:289.40px;height:21.00px;border:2.6px solid #d8101a;border-radius:4px;box-sizing:border-box"></div><div style="position:absolute;left:121.50px;top:652.71px;font-size:9.6px;line-height:11.52px;font-weight:bold;color:#5e6163;white-space:nowrap;">Copyright <span style="font-weight:normal;color:#5a87bd">© VSU2024</span></div><div style="position:absolute;right:109.60px;top:652.71px;font-size:9.6px;line-height:11.52px;font-weight:normal;color:#808080;white-space:nowrap;">Powered by Weberock</div><div style="position:absolute;left:58px;top:669.5px;width:1140.00px;height:35.50px;background:#202420"></div><div style="position:absolute;left:92.50px;top:676.09px;font-size:9.2px;line-height:11.04px;font-weight:normal;color:#ffffff;white-space:nowrap;-webkit-text-stroke:0.1px #fff;transform:scaleX(0.91);transform-origin:0 0;">28°C</div><div style="position:absolute;left:92.50px;top:687.80px;font-size:9.3px;line-height:11.16px;font-weight:normal;color:#e8e8e8;white-space:nowrap;">Mostly cloudy</div><div style="position:absolute;left:365px;top:675.8px;width:162.70px;height:22.70px;background:#f2f2f2;border-radius:11.5px"></div><div style="position:absolute;left:392.30px;top:680.58px;font-size:10.9px;line-height:13.08px;font-weight:normal;color:#5a5a5a;white-space:nowrap;transform:scaleX(0.87);transform-origin:0 0;">Search</div><div style="position:absolute;left:1029.00px;top:675.71px;font-size:9.6px;line-height:11.52px;font-weight:normal;color:#ffffff;white-space:nowrap;transform:scaleX(0.85);transform-origin:0 0;">ENG</div><div style="position:absolute;left:1032.00px;top:687.11px;font-size:9.6px;line-height:11.52px;font-weight:normal;color:#ffffff;white-space:nowrap;transform:scaleX(0.85);transform-origin:0 0;">US</div><div style="position:absolute;right:114.50px;top:675.60px;font-size:9.4px;line-height:11.28px;font-weight:normal;color:#ffffff;white-space:nowrap;transform:scaleX(0.92);transform-origin:100% 0;">11:24 am</div><div style="position:absolute;right:114.50px;top:687.20px;font-size:9.4px;line-height:11.28px;font-weight:normal;color:#ffffff;white-space:nowrap;transform:scaleX(0.97);transform-origin:100% 0;">09/01/2024</div><svg width="1280" height="720" style="position:absolute;left:0;top:0;pointer-events:none" viewBox="0 0 1280 720"><g fill="none" stroke="#1f1f1f" stroke-width="1.5" stroke-linecap="square"><path d="M67.2 109.2 H75.2 M71.2 105.2 L67.2 109.2 L71.2 113.2"/></g><g fill="none" stroke="#9a9a9a" stroke-width="1.4" stroke-linecap="square"><path d="M93.2 109.2 H101.2 M97.2 105.2 L101.2 109.2 L97.2 113.2"/></g><g fill="none" stroke="#1f1f1f" stroke-width="1.5"><path d="M128.2 110.2 A4.3 4.3 0 1 1 126.8 105.9"/></g><path d="M124.8 104.0 L129.4 104.0 L129.4 108.6 Z" fill="#1f1f1f"/><g fill="none" stroke="#333" stroke-width="1.3"><circle cx="153.6" cy="106.9" r="1.4"/><path d="M156 106.9 H161"/><circle cx="159.4" cy="111.8" r="1.4"/><path d="M152 111.8 H157"/></g><path d="M952.4 104.6 L953.9 108.1 L957.6 108.4 L954.8 110.8 L955.7 114.4 L952.4 112.5 L949.1 114.4 L950.0 110.8 L947.2 108.4 L950.9 108.1 Z" fill="none" stroke="#474747" stroke-width="1.3" stroke-linejoin="round"/><g fill="#1f1f1f"><rect x="983.8" y="104.2" width="7" height="1.3"/><rect x="983.8" y="106.8" width="7" height="1.3"/><rect x="983.8" y="109.4" width="4.5" height="1.3"/><rect x="991.6" y="104.4" width="1.3" height="7"/><rect x="991.6" y="104.2" width="3.8" height="1.4"/><circle cx="990.6" cy="111.2" r="1.9"/></g><g fill="none" stroke="#1f1f1f" stroke-width="1.4"><path d="M1016 103.5 V111.2 M1012.6 108.2 L1016 111.6 L1019.4 108.2"/><path d="M1010.7 111.5 V114.3 H1021.3 V111.5"/></g><rect x="1038.6" y="104.9" width="9.2" height="9.2" rx="1" fill="none" stroke="#1f1f1f" stroke-width="1.3"/><rect x="1043.6" y="104.9" width="4.2" height="9.2" fill="#1f1f1f"/><ellipse cx="1070.2" cy="109" rx="5.4" ry="7" fill="#3a2a24"/><ellipse cx="1070.2" cy="110.3" rx="3.6" ry="4.9" fill="#c99a84"/><path d="M1066.5 106.5 Q1070 102.5 1073.9 106.5" fill="#3a2a24"/><g fill="#1f1f1f"><circle cx="1181.3" cy="104.9" r="1.1"/><circle cx="1181.3" cy="109.4" r="1.1"/><circle cx="1181.3" cy="113.9" r="1.1"/></g><path d="M1188.6 136 L1191.6 132.8 L1194.6 136 Z" fill="#505050"/><path d="M1188.6 661 L1191.6 664.2 L1194.6 661 Z" fill="#505050"/></svg><svg width="1280" height="720" style="position:absolute;left:0;top:0;pointer-events:none" viewBox="0 0 1280 720"><defs><linearGradient id="cloudg" x1="0" y1="0" x2="0" y2="1"><stop offset="0" stop-color="#b9cdf0"/><stop offset="1" stop-color="#e6eefc"/></linearGradient><linearGradient id="wing" x1="0" y1="0" x2="1" y2="1"><stop offset="0" stop-color="#5fd0ff"/><stop offset="1" stop-color="#1e9de6"/></linearGradient><linearGradient id="balloon" x1="0" y1="0" x2="0" y2="1"><stop offset="0" stop-color="#8a5ee6"/><stop offset="0.45" stop-color="#f0506e"/><stop offset="1" stop-color="#f9c23c"/></linearGradient><linearGradient id="edge1" x1="0" y1="0" x2="1" y2="1"><stop offset="0" stop-color="#35c1f1"/><stop offset="0.6" stop-color="#1b7fd6"/><stop offset="1" stop-color="#0c59a4"/></linearGradient><linearGradient id="edge2" x1="0" y1="0" x2="1" y2="0"><stop offset="0" stop-color="#2fb8a0"/><stop offset="1" stop-color="#75d95a"/></linearGradient><linearGradient id="ppt" x1="0" y1="0" x2="1" y2="1"><stop offset="0" stop-color="#f08468"/><stop offset="1" stop-color="#c5391d"/></linearGradient><linearGradient id="folderg" x1="0" y1="0" x2="0" y2="1"><stop offset="0" stop-color="#ffd25e"/><stop offset="1" stop-color="#f3b733"/></linearGradient><g id="chrome"><path d="M0 0 L-7.97 -4.6 A9.2 9.2 0 0 1 7.97 -4.6 Z" fill="#db4437"/><path d="M0 0 L7.97 -4.6 A9.2 9.2 0 0 1 0 9.2 Z" fill="#fcc934"/><path d="M0 0 L0 9.2 A9.2 9.2 0 0 1 -7.97 -4.6 Z" fill="#34a853"/><circle cx="0" cy="0" r="4.4" fill="#ffffff"/><circle cx="0" cy="0" r="3.5" fill="#1a73e8"/></g></defs><path d="M69.5 694.5 Q68 694.5 68.6 691.6 Q69.2 688.6 72.6 688.8 Q74 684 78.8 684 Q83.6 684.2 84.6 688.6 Q87.6 689 87.4 692.2 Q87.2 694.6 85 694.8 Z" fill="url(#cloudg)"/><circle cx="83.75" cy="680.2" r="6.1" fill="#c42b1c"/><text x="83.6" y="683.6" font-size="9" font-weight="bold" fill="#ffffff" text-anchor="middle" font-family="Liberation Sans">1</text><g fill="url(#wing)"><rect x="337.2" y="678.7" width="8.5" height="8.5" rx="0.6"/><rect x="346.6" y="678.7" width="8.5" height="8.5" rx="0.6"/><rect x="337.2" y="688" width="8.5" height="8.5" rx="0.6"/><rect x="346.6" y="688" width="8.5" height="8.5" rx="0.6"/></g><g fill="none" stroke="#2a2a2a" stroke-width="1.5"><circle cx="378.6" cy="686.2" r="4"/><path d="M381.5 689.1 L384.6 692.2"/></g><path d="M491 697 Q495 690 507 690.5 L512 689 Q520 687 527 689 L526 697 Z" fill="#d98a4a"/><path d="M491 696 Q500 692 512 693" stroke="#6a7a3a" stroke-width="1.5" fill="none"/><circle cx="499.8" cy="683" r="5" fill="url(#balloon)"/><path d="M497.8 687 L499.8 690 L501.8 687 Z" fill="#f0b040"/><circle cx="493.4" cy="686.6" r="2.4" fill="#3fb8e0"/><circle cx="508.9" cy="682.8" r="2.2" fill="#5cb85c"/><circle cx="517.4" cy="682" r="3.2" fill="#e95e8c"/><rect x="537.4" y="683" width="13.3" height="12" fill="#6e6e6e" rx="0.6"/><rect x="542.1" y="679" width="13.3" height="11.75" fill="#f4f4f4" rx="0.6"/><rect x="542.1" y="683" width="8.6" height="7.75" fill="#b8b8b8"/><path d="M579 677.9 A8.9 8.9 0 1 1 573.6 693.9 L570.6 695.8 L571.5 692 A8.9 8.9 0 0 1 579 677.9 Z" fill="#7b6fd6"/><rect x="574.2" y="683.2" width="7.4" height="6.4" rx="1" fill="#ffffff"/><path d="M581.6 685.5 L584.2 683.6 V689.2 L581.6 687.3 Z" fill="#ffffff"/><circle cx="612" cy="686.8" r="9.2" fill="url(#edge1)"/><path d="M609.5 677.9 A9.2 9.2 0 0 1 621.2 686.8 Q621.2 690.8 617.4 691.2 Q613.6 691.4 613.2 688.2 Q616 684 612.4 681.8 Q610.6 680.6 606.2 681.2 Q607.4 678.8 609.5 677.9 Z" fill="url(#edge2)"/><ellipse cx="614.2" cy="687.4" rx="2.4" ry="2.2" fill="#0b2f63"/><path d="M604.4 688 Q606 694.6 612.8 695.6 Q617.6 695.8 619.8 693.2 Q614 694.2 610.6 691 Q607.8 688.4 604.4 688 Z" fill="#1558b0"/><use href="#chrome" x="644.9" y="686.8"/><rect x="668.5" y="684" width="18" height="11.6" fill="#2aa6ee"/><path d="M668.5 684 L677.5 678.6 L686.5 684 Z" fill="#1669c4"/><path d="M669.2 684 H685.8 L677.5 689.4 Z" fill="#f4f8fc"/><path d="M668.5 695.6 L677.5 688.5 L686.5 695.6 Z" fill="#1e8ede" opacity="0.5"/><path d="M703 696 Q702 690 706 687 Q704 682 709 679 Q714 679 715 684 Q719 687 717.6 692 L719 696 Z" fill="#e8e4de"/><rect x="701" y="693" width="18" height="3.5" fill="#f2f2f2"/><rect x="711" y="693.5" width="7" height="3" fill="#d64545"/><circle cx="714" cy="688" r="2.6" fill="#a89070"/><rect x="733.7" y="677.8" width="18.3" height="18" fill="#3b2ec4"/><rect x="733.7" y="677.8" width="18.3" height="18" fill="none" stroke="#c02020" stroke-width="1"/><circle cx="737" cy="681" r="2.8" fill="#f2e040"/><path d="M737 693 Q742 689 746 682 L749.5 681 Q744 688 741 694 Z" fill="#e02020"/><path d="M739 686 Q744 690 749 694 L747 695 Q742 691 738 688 Z" fill="#e83030"/><path d="M738 695 Q742 690 748 693 L750 695 Z" fill="#808080"/><path d="M767 680 Q767 679 768 679 H773.5 L775 680.6 H784 Q784.8 680.6 784.8 681.4 V694.8 Q784.8 695.6 784 695.6 H767.8 Q767 695.6 767 694.8 Z" fill="url(#folderg)"/><rect x="770.5" y="689.3" width="11" height="6.3" fill="#2e7bd0"/><circle cx="808.5" cy="686.8" r="8.9" fill="#1ed760"/><g fill="none" stroke="#0e1a0e" stroke-linecap="round"><path d="M803.2 684 Q808.5 682.2 814 684.5" stroke-width="1.7"/><path d="M803.8 687.2 Q808.5 685.8 813.2 687.8" stroke-width="1.5"/><path d="M804.4 690.2 Q808.5 689.2 812.4 690.8" stroke-width="1.3"/></g><rect x="826" y="672" width="29.6" height="30" rx="3" fill="#2c2e2c"/><use href="#chrome" x="840.6" y="688"/><circle cx="848.6" cy="679.6" r="5.6" fill="#e9e9e9"/><ellipse cx="848.6" cy="680" rx="4.3" ry="4.9" fill="#2d221e"/><ellipse cx="848.6" cy="680.8" rx="2.7" ry="3.5" fill="#c9a08a"/><rect x="835.6" y="699.2" width="11.3" height="2.2" rx="1.1" fill="#4cc2ff"/><circle cx="875" cy="686.8" r="8.6" fill="url(#ppt)"/><rect x="864.5" y="681.6" width="9.8" height="10.4" rx="1" fill="#c43e1c"/><text x="869.4" y="690.2" font-size="8" font-weight="bold" fill="#ffffff" text-anchor="middle" font-family="Liberation Sans">P</text><rect x="898" y="678.6" width="16.5" height="16.8" rx="2" fill="#c8151b"/><path d="M901.8 692.4 Q904.6 687 906.2 681.6 Q907.4 686.4 912.8 688.6 Q907 687.4 903 689" fill="none" stroke="#f6e6e6" stroke-width="1.6" stroke-linecap="round" stroke-linejoin="round"/><rect x="773.4" y="699.6" width="5.2" height="1.8" rx="0.9" fill="#9a9a9a"/><rect x="805.9" y="699.6" width="5.2" height="1.8" rx="0.9" fill="#9a9a9a"/><rect x="870.9" y="699.6" width="5.2" height="1.8" rx="0.9" fill="#9a9a9a"/><rect x="903.4" y="699.6" width="5.2" height="1.8" rx="0.9" fill="#9a9a9a"/><path d="M981.2 689 L985.3 684.9 L989.4 689" fill="none" stroke="#ffffff" stroke-width="1.4"/><circle cx="1009" cy="686.6" r="6.2" fill="#e4d33a"/><circle cx="1009" cy="686.6" r="3.6" fill="#3a9a3a"/><path d="M1009 683.8 V689.4 M1006.2 686.6 H1011.8" stroke="#e4d33a" stroke-width="1.2"/><g fill="none" stroke="#ffffff" stroke-width="1.1"><path d="M1068 681.5 H1060 V690 H1071 V686"/><path d="M1063.5 692.6 H1067.5 M1065.5 690 V692.6"/><rect x="1068.6" y="679.6" width="2.8" height="2.8"/><path d="M1070 682.4 V686"/></g><path d="M1077.5 684.6 H1079.6 L1082.4 682 V691.6 L1079.6 689 H1077.5 Z" fill="none" stroke="#ffffff" stroke-width="1.1"/><path d="M1084.2 684.4 Q1085.6 686.8 1084.2 689.2 M1086.2 683 Q1088.6 686.8 1086.2 690.6" fill="none" stroke="#ffffff" stroke-width="1"/><rect x="1095.6" y="683.6" width="10.6" height="6.6" rx="1.4" fill="none" stroke="#ffffff" stroke-width="1.1"/><rect x="1097.2" y="685.2" width="4.6" height="3.4" fill="#ffffff"/><rect x="1106.6" y="685.6" width="1.2" height="2.6" fill="#ffffff"/><path d="M1172.6 691 Q1174.2 689.6 1174.2 686 Q1174.4 681.4 1177.3 681.2 Q1180.2 681.4 1180.4 686 Q1180.4 689.6 1182 691 Z" fill="#8fd5f7"/><circle cx="1177.3" cy="692.6" r="1.3" fill="#8fd5f7"/></svg><svg width="1280" height="720" style="position:absolute;left:0;top:0;pointer-events:none" viewBox="0 0 1280 720"><defs>
<g id="users" fill="#ffffff">
  <circle cx="4.85" cy="2.6" r="2.1"/><circle cx="1.6" cy="3.2" r="1.45"/><circle cx="8.1" cy="3.2" r="1.45"/>
  <path d="M2.2 9.3 Q2.2 5.1 4.85 5.1 Q7.5 5.1 7.5 9.3 Z"/>
  <path d="M0 7.6 Q0 4.9 1.8 4.9 L2.6 5.4 Q1.8 6.5 1.9 7.6 Z"/>
  <path d="M9.7 7.6 Q9.7 4.9 7.9 4.9 L7.1 5.4 Q7.9 6.5 7.8 7.6 Z"/>
</g>
<g id="pdf" fill="none" stroke="#ffffff" stroke-width="1.25">
  <path d="M0.6 0.6 H5.2 L7.5 2.9 V9.1 H0.6 Z"/>
  <path d="M2.2 7.6 Q3.4 4.2 3.6 2.4 Q4.2 5.9 6.1 6.7 Q3.6 6.6 2.2 7.6 Z" stroke-width="0.8"/>
</g>
<g id="xls" fill="none" stroke="#ffffff" stroke-width="1.25">
  <path d="M0.6 0.6 H5.2 L7.5 2.9 V9.1 H0.6 Z"/>
  <path d="M2.4 4.2 L5.6 8 M5.6 4.2 L2.4 8" stroke-width="1"/>
</g>
</defs><use href="#users" x="844.9" y="247.20"/><use href="#pdf" x="945" y="247.20"/><use href="#xls" x="1013" y="247.20"/><use href="#users" x="844.9" y="275.72"/><use href="#pdf" x="945" y="275.72"/><use href="#xls" x="1013" y="275.72"/><use href="#users" x="844.9" y="304.24"/><use href="#pdf" x="945" y="304.24"/><use href="#xls" x="1013" y="304.24"/><use href="#users" x="844.9" y="332.76"/><use href="#pdf" x="945" y="332.76"/><use href="#xls" x="1013" y="332.76"/><use href="#users" x="844.9" y="361.28"/><use href="#pdf" x="945" y="361.28"/><use href="#xls" x="1013" y="361.28"/><use href="#users" x="844.9" y="389.80"/><use href="#pdf" x="945" y="389.80"/><use href="#xls" x="1013" y="389.80"/><use href="#users" x="844.9" y="418.32"/><use href="#pdf" x="945" y="418.32"/><use href="#xls" x="1013" y="418.32"/><use href="#users" x="844.9" y="446.84"/><use href="#pdf" x="945" y="446.84"/><use href="#xls" x="1013" y="446.84"/><use href="#users" x="844.9" y="475.36"/><use href="#pdf" x="945" y="475.36"/><use href="#xls" x="1013" y="475.36"/><use href="#users" x="844.9" y="503.88"/><use href="#pdf" x="945" y="503.88"/><use href="#xls" x="1013" y="503.88"/><g fill="#ffffff"><path d="M1063.4 190 V186.9 Q1063.4 186.4 1063.9 186.4 H1068.1 Q1068.6 186.4 1068.6 186.9 V190" fill="none" stroke="#fff" stroke-width="1.1"/><rect x="1061.8" y="189.6" width="8.4" height="3.2" rx="0.9"/><rect x="1063.2" y="192.6" width="5.6" height="1.3"/></g><g fill="#b5c0cf"><path d="M77.2 153 H74.2 Q72.7 153 72.7 154.5 V160.5 Q72.7 162 74.2 162 H77.2 V160.6 H74.4 Q74.1 160.6 74.1 160.3 V154.7 Q74.1 154.4 74.4 154.4 H77.2 Z"/><path d="M76 156.2 H79.4 V153.1 L83.8 157.5 L79.4 161.8 V158.9 H76 Z"/></g><g fill="#3c3c3c"><circle cx="144" cy="149.9" r="1.1"/><path d="M141 150.6 L142.2 150.2 L143.2 151.6 H144.8 L145.8 150.2 L147 150.6 L145.3 152.6 V157.5 H144.4 V155 H143.6 V157.5 H142.7 V152.6 Z"/></g><path d="M230 149.2 Q230 148.75 230.5 148.75 H233.4 L234.6 150 H238.5 Q239 150 239 150.5 V155.8 Q239 156.25 238.5 156.25 H230.5 Q230 156.25 230 155.8 Z" fill="#a7b1c2"/><path d="M316 152.2 H318 V156.75 H316 Z M318.7 152.2 L320.6 148.75 Q321.8 148.9 321.4 150.6 L321 152 H323.6 Q324.2 152.3 324 153 L323 156.3 Q322.8 156.75 322.2 156.75 H318.7 Z" fill="#a7b1c2"/><g><rect x="410" y="148.75" width="8.75" height="8.25" rx="1.6" fill="#a7b1c2"/><path d="M412.2 155.3 Q412.3 151.9 415.4 151.6 V150.3 L417.4 152.3 L415.4 154.3 V153 Q413.6 153 412.2 155.3 Z" fill="#ffffff"/></g></svg>
</body></html>
